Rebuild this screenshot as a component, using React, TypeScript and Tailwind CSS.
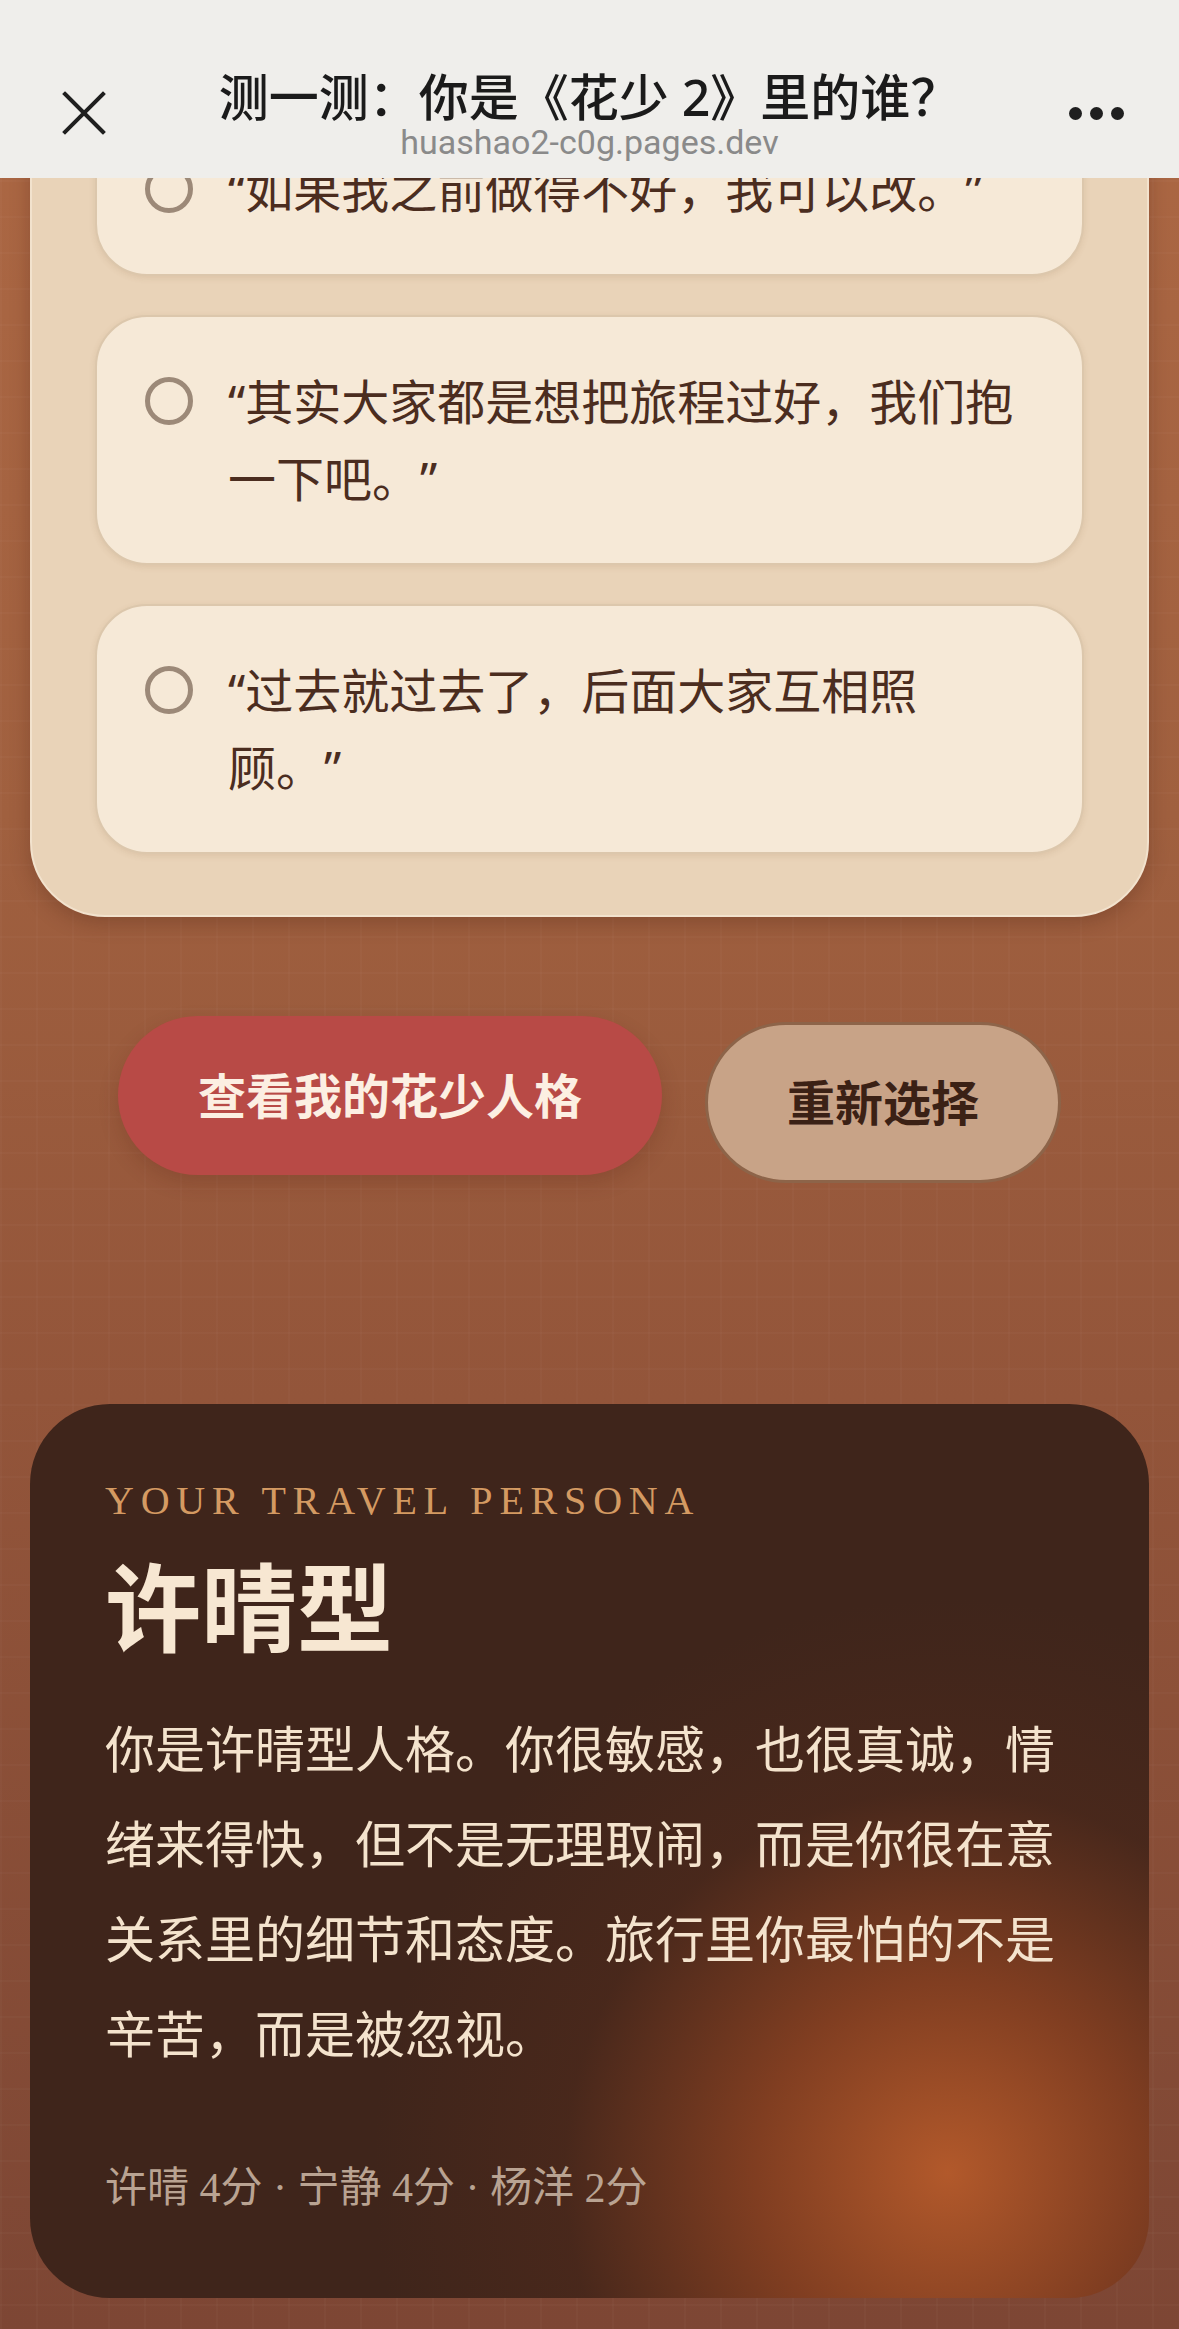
const options = [
  "“如果我之前做得不好，我可以改。”",
  "“其实大家都是想把旅程过好，我们抱一下吧。”",
  "“过去就过去了，后面大家互相照顾。”",
];

const Header = () => {
  return (
    <div className="absolute top-0 left-0 right-0 h-[178px] bg-[#efeeeb] flex items-start font-['Noto_Sans','Noto_Sans_CJK_SC',sans-serif]">
      <div className="w-[150px] pl-[62px] pt-[91px]">
        <svg width="44" height="44" viewBox="0 0 44 44">
          <path d="M3 3 L41 41 M41 3 L3 41" stroke="#1f1f1f" strokeWidth="4" strokeLinecap="square" />
        </svg>
      </div>
      <div className="flex-1 flex flex-col items-center pt-[72px]">
        <div className="text-[50px] leading-[50px] font-medium text-[#1b1b1b] whitespace-nowrap">
          测一测：你是《花少 2》里的谁？
        </div>
        <div className="text-[34px] leading-[40px] text-[#8a8a8a] font-['Roboto','Noto_Sans',sans-serif]">
          huashao2-c0g.pages.dev
        </div>
      </div>
      <div className="w-[150px] pr-[55px] pt-[107px] flex justify-end gap-[8px]">
        <span className="size-[13px] rounded-full bg-[#1f1f1f]" />
        <span className="size-[13px] rounded-full bg-[#1f1f1f]" />
        <span className="size-[13px] rounded-full bg-[#1f1f1f]" />
      </div>
    </div>
  );
};

const Option = ({ text }: { text: string }) => {
  return (
    <div className="rounded-[52px] border-2 border-[#dcc7ac] bg-[#f6e9d7] pl-[48px] pr-[62px] py-[46px] flex items-start gap-[35px] shadow-[0_2px_6px_rgba(120,80,40,0.12)]">
      <span className="mt-[14px] size-[48px] shrink-0 rounded-full border-[5px] border-[#9c8978]" />
      <p className="text-[48px] leading-[77px] text-[#4b2d1f] [text-spacing-trim:space-all]">{text}</p>
    </div>
  );
};

export default function App() {
  return (
    <div className="relative w-full h-[2329px] overflow-hidden bg-[linear-gradient(180deg,#ad6844_0%,#a0603f_35%,#93553a_60%,#7d4634_100%)] font-['Noto_Sans','Noto_Sans_CJK_SC',sans-serif]">
      <div className="h-full bg-[linear-gradient(rgba(255,255,255,0.02)_2px,transparent_2px),linear-gradient(90deg,rgba(255,255,255,0.02)_2px,transparent_2px)] bg-[size:36px_36px]">
        <div className="mx-[30px] rounded-[75px] border-2 border-[#f2e2cd] bg-[#e9d3b8] px-[63px] pt-[101px] pb-[61px] flex flex-col gap-[39px] shadow-[0_6px_20px_rgba(60,25,10,0.25)]">
          {options.map((o) => (
            <Option key={o} text={o} />
          ))}
        </div>

        <div className="mt-[99px] flex justify-center items-start gap-[43px]">
          <button className="h-[159px] px-[80px] rounded-full bg-[#b84a46] text-[48px] font-bold text-[#fcefe2] shadow-[0_8px_20px_rgba(80,20,10,0.18)]">
            查看我的花少人格
          </button>
          <button className="mt-[6px] h-[161px] px-[79px] rounded-full border-[3px] border-[#8d6449] bg-[#c8a387] text-[48px] font-bold text-[#3b2115]">
            重新选择
          </button>
        </div>

        <div className="mt-[221px] mx-[30px] rounded-[80px] bg-[#3f251b] bg-[radial-gradient(circle_at_82%_86%,#b2592b_0%,rgba(150,70,35,0.75)_16%,rgba(90,45,28,0.35)_32%,rgba(63,37,27,0)_48%)] pl-[75px] pr-[60px] pt-[72px] pb-[80px]">
          <div className="text-[40px] leading-[50px] tracking-[0.17em] text-[#d49a62] font-['Liberation_Serif',serif]">
            YOUR TRAVEL PERSONA
          </div>
          <div className="mt-[26px] text-[96px] leading-[110px] font-bold text-[#f7e7d2]">
            许晴型
          </div>
          <p className="mt-[40px] text-[50px] leading-[95px] text-[#f4e3cd]">
            你是许晴型人格。你很敏感，也很真诚，情绪来得快，但不是无理取闹，而是你很在意关系里的细节和态度。旅行里你最怕的不是辛苦，而是被忽视。
          </p>
          <div className="mt-[76px] text-[42px] leading-[60px] text-[#b9a392] font-['Liberation_Serif','Noto_Sans_CJK_SC',serif]">
            许晴 4分 · 宁静 4分 · 杨洋 2分
          </div>
        </div>
      </div>
      <Header />
    </div>
  );
}
